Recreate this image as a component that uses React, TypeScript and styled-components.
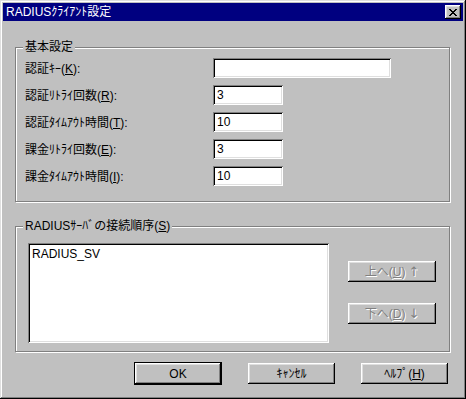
import styled, { createGlobalStyle } from "styled-components";

const GlobalStyle = createGlobalStyle`
  * {
    margin: 0;
    padding: 0;
    box-sizing: border-box;
  }
  body {
    background: #c0c0c0;
    font-family: "Liberation Sans", "Noto Sans CJK JP", sans-serif;
    font-size: 12px;
  }
`;

// janela principal com borda 3d
const Ventana = styled.div`
  width: 466px;
  height: 399px;
  padding: 3px;
  background: #c0c0c0;
  display: flex;
  flex-direction: column;
  box-shadow: inset -1px -1px #000, inset 1px 1px #dfdfdf, inset -2px -2px #808080,
    inset 2px 2px #fff;
`;

const BarraTitulo = styled.div`
  height: 18px;
  background: #000080;
  display: flex;
  align-items: center;
  justify-content: space-between;
  padding: 0 2px 0 3px;
  color: #fff;
  line-height: 14px;
`;

const BotaoFechar = styled.button`
  width: 16px;
  height: 14px;
  border: none;
  background: #c0c0c0;
  display: flex;
  align-items: center;
  justify-content: center;
  padding-top: 1px;
  box-shadow: inset -1px -1px #000, inset 1px 1px #fff, inset -2px -2px #808080,
    inset 2px 2px #dfdfdf;
`;

const Corpo = styled.div`
  flex: 1;
  display: flex;
  flex-direction: column;
  padding: 19px 13px 0 12px;
`;

// caixa de grupo (etched)
const Grupo = styled.fieldset<{ $top: number }>`
  margin-top: ${(p) => p.$top}px;
  border: 1px solid #808080;
  box-shadow: inset 1px 1px #fff, 1px 1px #fff;
  min-inline-size: 0;
  padding: 0;
`;

const Legenda = styled.legend`
  margin-left: 7px;
  padding: 0 2px;
  line-height: 14px;
  color: #000;
  background: #c0c0c0;
`;

const ListaCampos = styled.div`
  display: flex;
  flex-direction: column;
  gap: 7px;
  padding: 4px 0 15px 9px;
`;

const Linha = styled.div`
  display: flex;
  align-items: center;
  height: 20px;
`;

const Rotulo = styled.label`
  width: 188px;
  line-height: 14px;
  padding-top: 2px;
  color: #000;
`;

const Campo = styled.div<{ $w: number }>`
  width: ${(p) => p.$w}px;
  height: 20px;
  background: #fff;
  padding: 3px 0 0 4px;
  line-height: 14px;
  color: #000;
  box-shadow: inset 1px 1px #808080, inset -1px -1px #fff, inset 2px 2px #000,
    inset -2px -2px #dfdfdf;
`;

const AreaServidores = styled.div`
  display: flex;
  padding: 10px 0 8px 12px;
`;

const Lista = styled.div`
  width: 301px;
  height: 100px;
  background: #fff;
  padding: 4px 4px;
  line-height: 14px;
  color: #000;
  box-shadow: inset 1px 1px #808080, inset -1px -1px #fff, inset 2px 2px #000,
    inset -2px -2px #dfdfdf;
`;

const ColunaBotoes = styled.div`
  display: flex;
  flex-direction: column;
  gap: 21px;
  margin: 18px 0 0 19px;
`;

const Botao = styled.button<{ $w?: number; $padrao?: boolean }>`
  width: ${(p) => p.$w ?? 88}px;
  height: ${(p) => (p.$padrao ? 23 : 21)}px;
  background: #c0c0c0;
  border: ${(p) => (p.$padrao ? "1px solid #000" : "none")};
  font-family: "Liberation Sans", "Noto Sans CJK JP", sans-serif;
  font-size: 12px;
  line-height: 14px;
  color: #000;
  box-shadow: inset -1px -1px #000, inset 1px 1px #fff, inset -2px -2px #808080,
    inset 2px 2px #dfdfdf;
  &:disabled {
    color: #808080;
    text-shadow: 1px 1px #fff;
  }
`;

// seta dos botões de ordem
const Seta = styled.span`
  font-family: "DejaVu Sans", sans-serif;
  font-size: 13px;
  margin-left: 3px;
`;

const Rodape = styled.div`
  display: flex;
  justify-content: flex-end;
  gap: 26px;
  margin-top: 10px;
  padding-right: 2px;
  align-items: center;
`;

const IconeX = () => (
  <svg width="8" height="7" viewBox="0 0 8 7" shapeRendering="crispEdges">
    <path
      fill="#000"
      d="M0 0h2v1H0zM6 0h2v1H6zM1 1h2v1H1zM5 1h2v1H5zM2 2h4v1H2zM3 3h2v1H3zM2 4h4v1H2zM1 5h2v1H1zM5 5h2v1H5zM0 6h2v1H0zM6 6h2v1H6z"
    />
  </svg>
);

const campos = [
  { pre: "認証ｷｰ(", key: "K", w: 178, valor: "" },
  { pre: "認証ﾘﾄﾗｲ回数(", key: "R", w: 70, valor: "3" },
  { pre: "認証ﾀｲﾑｱｳﾄ時間(", key: "T", w: 70, valor: "10" },
  { pre: "課金ﾘﾄﾗｲ回数(", key: "E", w: 70, valor: "3" },
  { pre: "課金ﾀｲﾑｱｳﾄ時間(", key: "I", w: 70, valor: "10" },
];

const App = () => {
  return (
    <>
      <GlobalStyle />
      <Ventana>
        <BarraTitulo>
          <span>RADIUSｸﾗｲｱﾝﾄ設定</span>
          <BotaoFechar>
            <IconeX />
          </BotaoFechar>
        </BarraTitulo>
        <Corpo>
          <Grupo $top={0}>
            <Legenda>基本設定</Legenda>
            <ListaCampos>
              {campos.map((c) => (
                <Linha key={c.key}>
                  <Rotulo>
                    {c.pre}
                    <u>{c.key}</u>):
                  </Rotulo>
                  <Campo $w={c.w}>{c.valor}</Campo>
                </Linha>
              ))}
            </ListaCampos>
          </Grupo>
          <Grupo $top={17}>
            <Legenda>
              RADIUSｻｰﾊﾞの接続順序(<u>S</u>)
            </Legenda>
            <AreaServidores>
              <Lista>RADIUS_SV</Lista>
              <ColunaBotoes>
                <Botao disabled>
                  上へ(<u>U</u>)<Seta>↑</Seta>
                </Botao>
                <Botao disabled>
                  下へ(<u>D</u>)<Seta>↓</Seta>
                </Botao>
              </ColunaBotoes>
            </AreaServidores>
          </Grupo>
          <Rodape>
            <Botao $w={88} $padrao>
              OK
            </Botao>
            <Botao $w={87}>ｷｬﾝｾﾙ</Botao>
            <Botao $w={87}>
              ﾍﾙﾌﾟ(<u>H</u>)
            </Botao>
          </Rodape>
        </Corpo>
      </Ventana>
    </>
  );
};

export default App;
